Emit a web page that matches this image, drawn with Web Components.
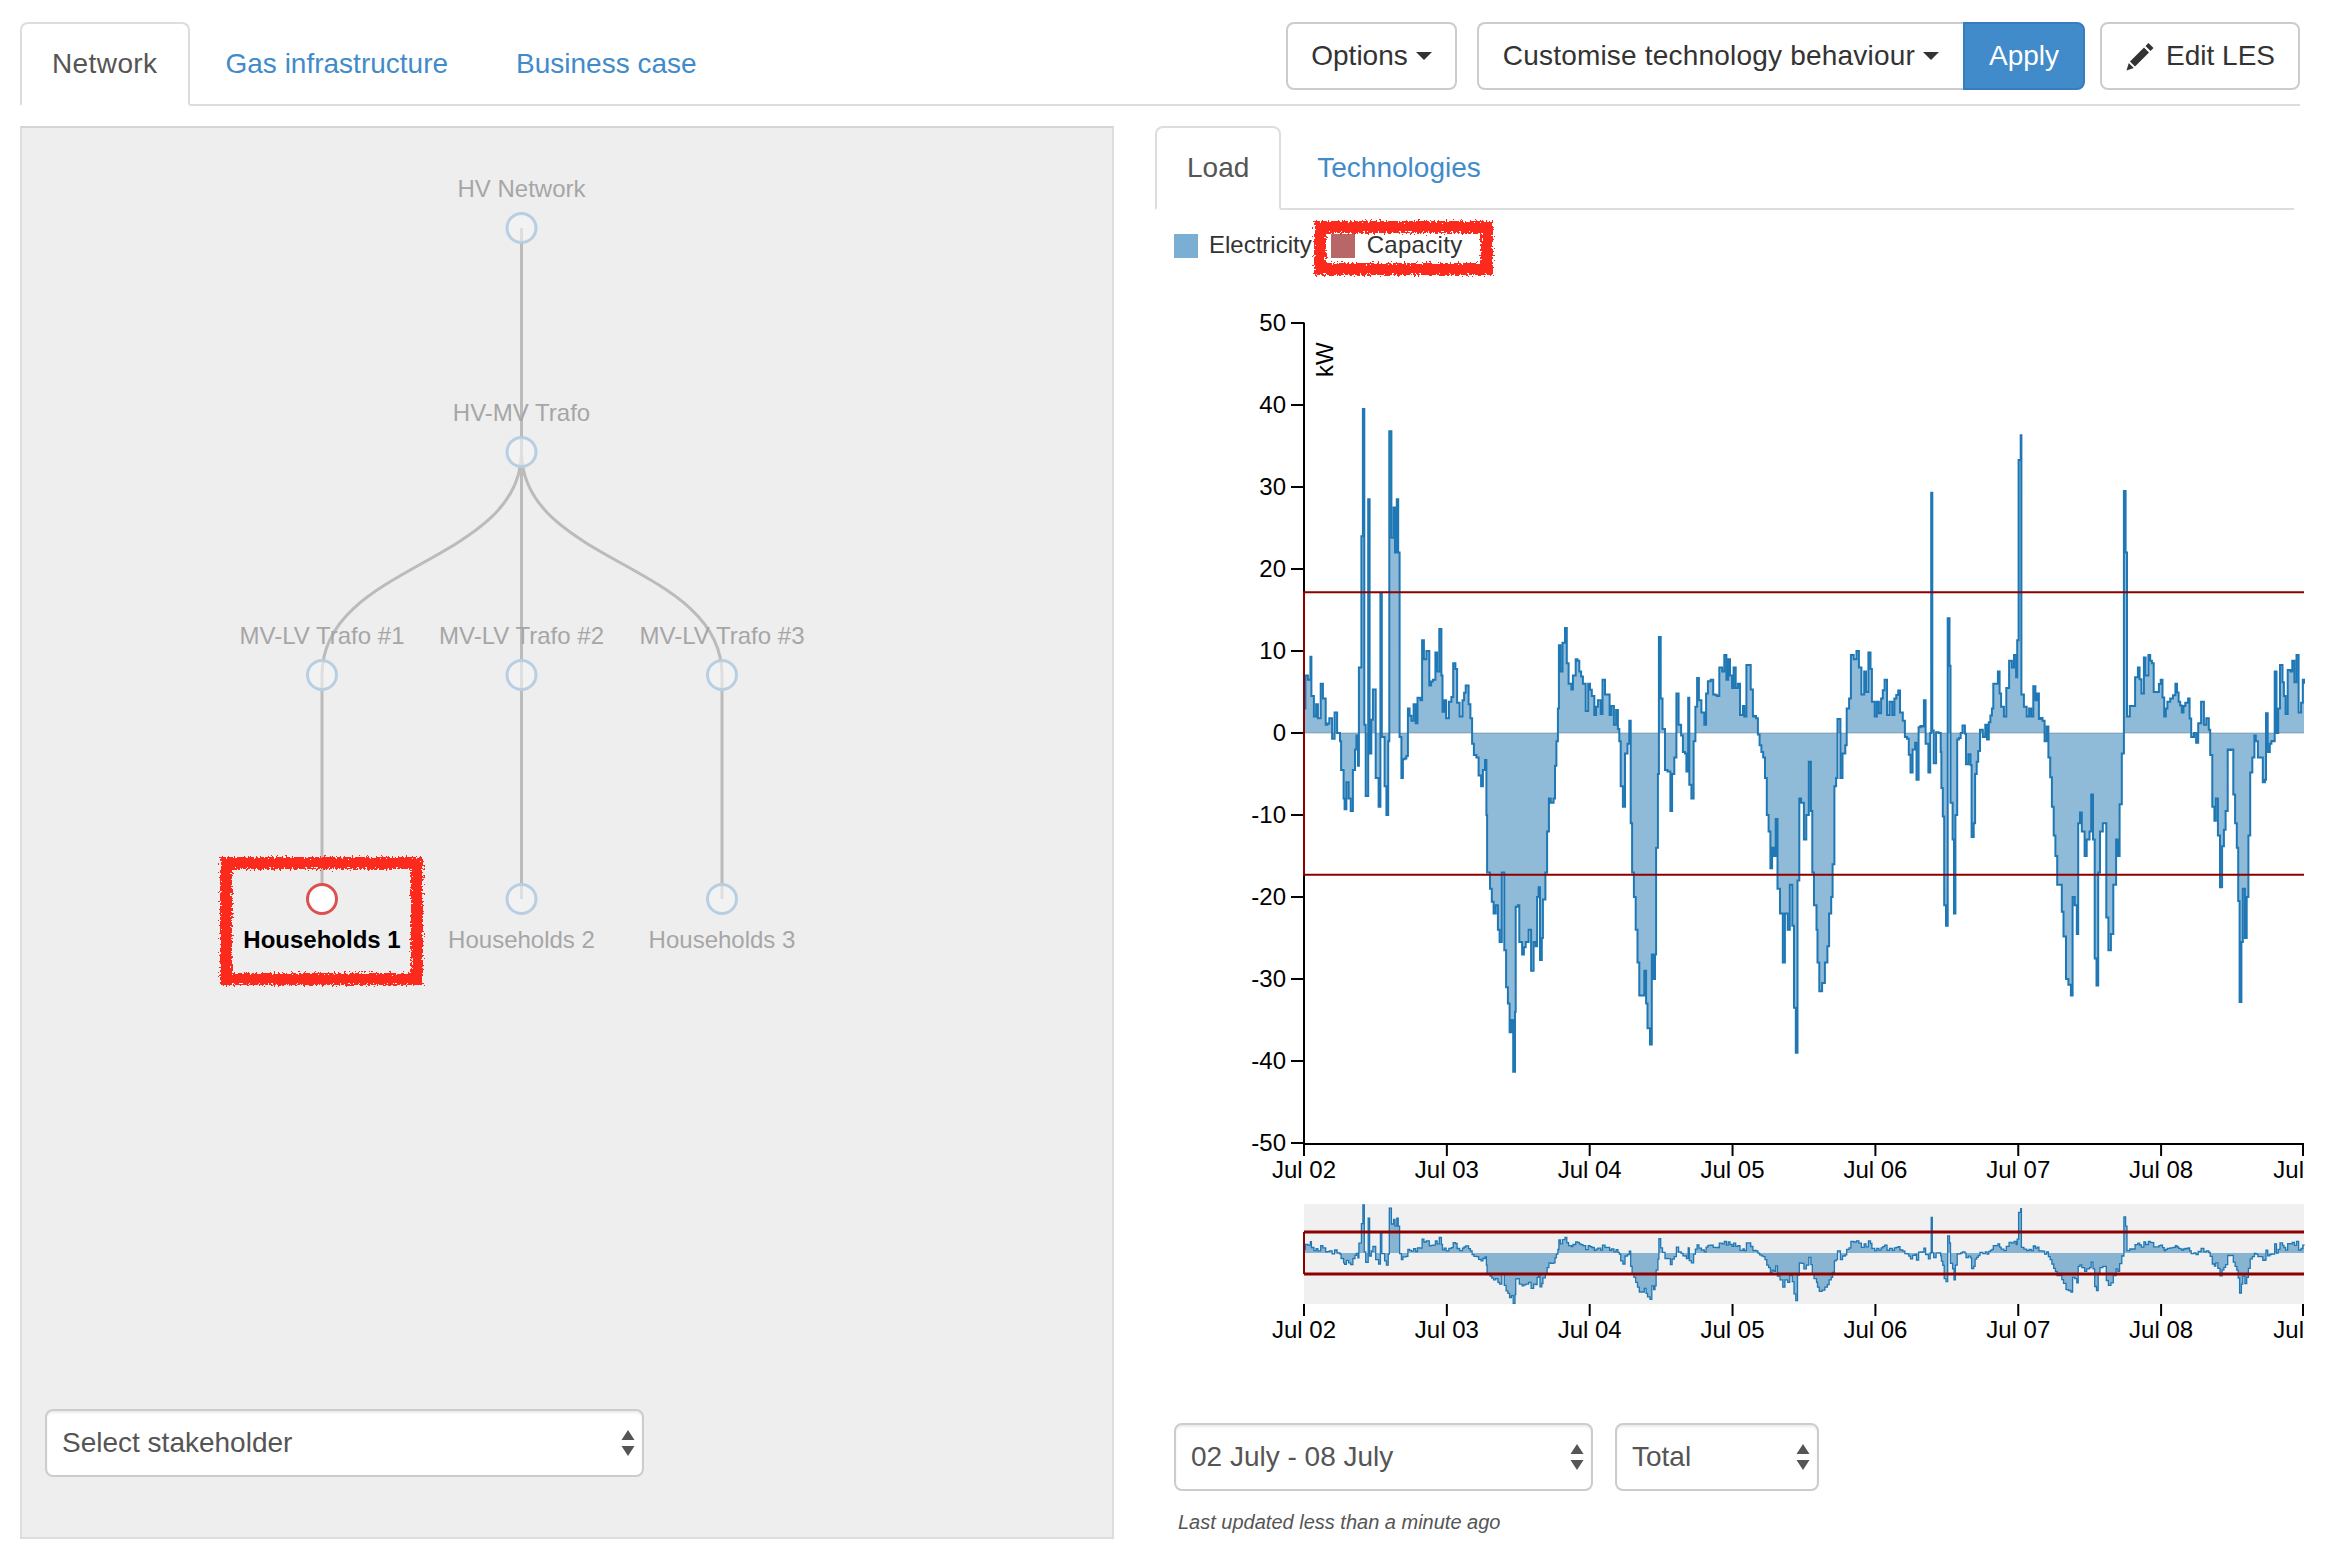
<!DOCTYPE html>
<html>
<head>
<meta charset="utf-8">
<title>LES</title>
<style>
  html, body { margin: 0; background: #fff; }
  body { font-family: "Liberation Sans", Arial, sans-serif; font-size: 28px; color: #333; }
</style>
</head>
<body>
<les-app></les-app>
<script>
// traced from the reference: [zoom x, kW], first part x = 1240 + zx / 2.8, second x = 1780 + zx / 2.85
const TRACE_A = [179,3,183,7,190,6.5,197,9.3,200,4.5,207,2,213,3.5,218,1.8,226,6,232,4.2,240,1,250,1.8,258,-.7,265,2.5,272,0,280,-1,283,-4.5,290,-8,293,-9.3,298,-6,304,-8,310,-9.5,316,-4.5,322,-2,326,-.3,330,-4,333,8,340,24,344,39.5,348,1,352,-7.7,359,28.5,363,-2.5,372,5.3,380,-5.5,388,-9,393,17,397,-.5,405,-6.5,410,-10,415,-1,418,36.8,424,23.8,430,27.5,434,22,439,28.5,443,22,447,-.5,452,-5.5,456,-3.2,466,-2.8,470,3,480,1.5,486,3.5,492,1.2,497,4.3,505,4,510,11.3,515,9,522,10,530,5.8,540,6.5,547,9.8,552,7.5,558,12.7,564,7,567,2.6,572,4,577,1.8,585,3.8,592,4.4,597,8.5,603,7.8,608,3.7,615,2,623,4,632,5.8,640,3.5,645,1.8,650,-1.3,655,-2.7,662,-3,668,-5.2,675,-6.5,680,-4.5,686,-3.3,690,-10,692,-17,700,-19,710,-22,716,-21,722,-24,727,-25.5,733,-17,740,-26.5,745,-31,750,-33,755,-36.5,760,-35,765,-41.3,770,-34,772,-21.2,778,-21,782,-25.5,790,-27,800,-25.5,808,-24,815,-29,822,-25.5,828,-26,832,-20,836,-18.8,840,-27.7,845,-25,848,-20.3,855,-17,860,-12,865,-8,870,-8.5,878,-8,882,-4,886,-1,890,3,893,10.7,897,7.5,903,11,910,12.8,915,8.5,920,6,928,5.3,932,7,940,9,945,8.8,950,7.5,960,6,968,2.7,975,6,985,4.5,992,2.2,1002,4,1010,2.3,1015,6.5,1022,4.7,1030,4.7,1035,2.2,1040,3.3,1047,1,1053,2.8,1058,.5,1062,-1,1066,-6.5,1072,-9,1078,-2.5,1085,-1.3,1090,1.5,1094,-11,1098,-17,1103,-20,1108,-24,1113,-28,1118,-32,1125,-32,1132,-29,1137,-33,1141,-36,1148,-38,1153,-27,1158,-30,1162,-27,1165,-14,1170,-5,1173,11.7,1178,4.2,1183,.5,1190,-4.5,1197,-4.7,1205,-9.5,1210,-5,1216,-3,1222,4.8,1228,1,1235,-.3,1240,-2.3,1246,-2.5,1250,-4.7,1255,4.3,1258,-6.3,1264,-8,1270,-1,1275,3.2,1280,6.7,1285,4,1292,2.5,1300,1,1305,4.8,1310,6.3,1318,6.5,1325,4.7,1335,4.5,1342,8,1350,7.5,1356,9.5,1362,6.5,1367,9,1372,7,1378,5.5,1382,8,1388,5.5,1394,6,1400,2.2,1408,3.3,1412,2,1418,8.3,1423,8.3,1430,5.3,1436,2,1445,1.8,1450,-.2,1455,-1.5,1460,-2.3,1465,-3,1470,-5.5,1475,-10,1480,-12,1485,-16.5,1490,-14,1495,-15,1500,-10.5,1505,-19];
const TRACE_B = [0,-22,8,-28,14,-22,22,-24,28,-18.5,35,-23.5,40,-33.5,45,-39,50,-18,55,-8,60,-8.5,68,-13,75,-10,82,-3.5,88,-9.5,92,-17,97,-21,104,-24,107,-28,112,-31.5,120,-30.5,128,-28,135,-26,140,-22,146,-20,150,-16,155,-6.5,160,-5.5,164,1.7,172,-5.5,178,-2.5,186,-1.5,190,3,197,4.2,202,9.5,210,9,218,10,225,8,232,4.7,240,7.5,245,5,252,9.8,258,7.8,262,3.8,270,2,276,3.8,282,2.4,288,4.2,298,6.5,305,2.2,312,3.8,320,2.2,326,4.2,337,5.2,342,2.5,350,1.5,356,-.5,362,-.7,372,-4.8,378,-2,385,-1.2,389,-5.7,395,.7,405,.8,410,4,415,-1.3,423,-4.8,428,0,431,29.3,434,.3,438,-3.7,445,.1,452,0,458,-2.3,460,-6.7,464,-10.2,468,-21,473,-23.5,478,14,483,8.2,486,-8.5,492,-13,496,-22,500,-10,505,-.8,515,0,520,.9,527,-.1,530,-3.8,537,-2.6,543,-3.9,546,-12.7,552,-11,556,-5,565,-2.2,570,.4,578,-.5,585,1,590,-.8,595,1.3,604,3,608,6,615,6,621,7.5,626,4.8,630,3.2,638,2,645,5.5,653,8.8,661,8,667,9.5,673,6.8,676,11.3,680,33.3,686,36.3,688,4.7,695,3.2,703,2,710,3,716,2,722,5.7,728,4,733,4.8,738,1.7,748,1.5,754,-1,760,.8,765,-3,770,-5.4,775,-9,780,-12.5,785,-15,790,-18.5,797,-18.5,803,-21.8,808,-24.8,815,-30,822,-30.7,829,-32,834,-20,840,-21,846,-24.5,850,-11,855,-9.7,860,-12,868,-15,874,-13,882,-12,887,-7.5,892,-13,897,-27.5,902,-30.8,907,-17,912,-12,920,-11,925,-11,930,-22.5,936,-26.5,943,-24.5,950,-18.5,958,-13,963,-15,968,-8.7,974,-2.5,980,29.5,985,22,989,2,997,3.3,1005,3.3,1012,6.8,1020,8,1030,4.8,1037,9.2,1042,7,1050,9.5,1060,8.5,1065,5,1075,5,1085,6.5,1095,2,1104,3.8,1112,4.2,1120,4.6,1127,6,1136,3.8,1145,2.5,1155,3.7,1163,4.2,1172,-.5,1180,0,1186,-1.2,1192,1.2,1200,3.8,1208,1,1215,1.8,1222,.4,1226,-2.7,1232,-9,1238,-10.7,1242,-8,1248,-12.5,1254,-18.8,1260,-13.8,1265,-11.8,1270,-9.5,1276,-2,1285,-2,1292,-7.5,1297,-11,1302,-14,1306,-20.5,1310,-32.8,1315,-25.5,1319,-19,1325,-25,1330,-20,1335,-12.5,1340,-4.8,1346,-3,1352,-.3,1356,-1,1362,-3,1370,-3,1376,-6,1382,-5.7,1385,2.4,1390,-2.3,1396,-1.3,1405,-1,1410,7.5,1415,0,1420,3,1425,8.3,1432,6.2,1436,4.5,1441,2.3,1447,7.7,1455,7.5,1460,8.8,1466,6.2,1472,9.5,1478,2.5,1485,3.7,1490,6.5,1493,6];

function buildSeries() {
  const nodes = [];
  for (let i = 0; i < TRACE_A.length; i += 2) nodes.push([1240 + TRACE_A[i] / 2.8, TRACE_A[i + 1]]);
  for (let i = 0; i < TRACE_B.length; i += 2) nodes.push([1780 + TRACE_B[i] / 2.85, TRACE_B[i + 1]]);
  nodes[0][0] = 1304;
  nodes[nodes.length - 1][0] = 2304;
  // fill gaps with 15 minute samples so the line stays stepped
  const dx = 1000 / (7 * 96);
  let seed = 7;
  const rnd = () => (seed = (seed * 16807) % 2147483647) / 2147483647;
  const out = [];
  nodes.forEach((n, i) => {
    out.push(n);
    const next = nodes[i + 1];
    if (!next) return;
    const steps = Math.floor((next[0] - n[0]) / dx);
    for (let k = 1; k < steps; k++) {
      const t = k / steps;
      const v = n[1] + (next[1] - n[1]) * t + (rnd() - .5) * .5;
      out.push([n[0] + (next[0] - n[0]) * t, v]);
    }
  });
  return out;
}

function stepLine(series, yOf) {
  let d = `M${series[0][0].toFixed(1)} ${yOf(series[0][1]).toFixed(1)}`;
  for (let i = 1; i < series.length; i++) {
    d += `H${series[i][0].toFixed(1)}V${yOf(series[i][1]).toFixed(1)}`;
  }
  return d;
}

class NavTab extends HTMLElement {
  connectedCallback() {
    this.attachShadow({ mode: 'open' }).innerHTML = `
      <style>
        :host {
          display: block;
          margin: 0 4px -2px 0;
          padding: 20px 30px;
          border: 2px solid transparent;
          border-radius: 8px 8px 0 0;
          line-height: 40px;
          font-size: 28px;
          color: #428bca;
        }
        :host([active]) {
          color: #555;
          background: #fff;
          border-color: #ddd #ddd #fff;
        }
      </style>
      <slot></slot>`;
  }
}
customElements.define('nav-tab', NavTab);

class TabBar extends HTMLElement {
  connectedCallback() {
    this.attachShadow({ mode: 'open' }).innerHTML = `
      <style>
        :host {
          display: flex;
          justify-content: space-between;
          border-bottom: 2px solid #ddd;
        }
        .tabs { display: flex; }
        .actions { display: flex; align-items: flex-start; }
      </style>
      <div class="tabs"><slot></slot></div>
      <div class="actions"><slot name="actions"></slot></div>`;
  }
}
customElements.define('tab-bar', TabBar);

class UiBtn extends HTMLElement {
  connectedCallback() {
    const caret = this.hasAttribute('caret') ? '<span class="caret"></span>' : '';
    this.attachShadow({ mode: 'open' }).innerHTML = `
      <style>
        :host {
          display: flex;
          align-items: center;
          box-sizing: border-box;
          height: 68px;
          padding: 0 24px;
          background: #fff;
          border: 2px solid #ccc;
          border-radius: 8px;
          font-size: 28px;
          color: #333;
          white-space: nowrap;
        }
        :host([primary]) {
          background: #428bca;
          border-color: #357ebd;
          color: #fff;
        }
        :host([left]) { border-radius: 8px 0 0 8px; border-right: 0; }
        :host([right]) { border-radius: 0 8px 8px 0; }
        .caret {
          width: 0; height: 0;
          margin-left: 8px;
          border-top: 8px solid currentColor;
          border-left: 8px solid transparent;
          border-right: 8px solid transparent;
        }
      </style>
      <slot></slot>${caret}`;
  }
}
customElements.define('ui-btn', UiBtn);

class UiSelect extends HTMLElement {
  connectedCallback() {
    this.attachShadow({ mode: 'open' }).innerHTML = `
      <style>
        :host {
          display: flex;
          align-items: center;
          justify-content: space-between;
          box-sizing: border-box;
          height: 68px;
          padding: 0 7px 0 15px;
          background: #fff;
          border: 2px solid #ccc;
          border-radius: 8px;
          box-shadow: inset 0 2px 2px rgba(0, 0, 0, .075);
          font-size: 28px;
          color: #555;
        }
        svg { flex: none; }
      </style>
      <slot></slot>
      <svg width="14" height="26" viewBox="0 0 14 26">
        <path d="M7 0 L13.5 10 L.5 10Z M7 26 L13.5 16 L.5 16Z" fill="#555"/>
      </svg>`;
  }
}
customElements.define('ui-select', UiSelect);

// the hand drawn red marker round a region
class ScribbleBox extends HTMLElement {
  connectedCallback() {
    const w = +this.getAttribute('w');
    const h = +this.getAttribute('h');
    const t = +this.getAttribute('thick') || 11;
    this.attachShadow({ mode: 'open' }).innerHTML = `
      <style>
        :host { display: block; position: absolute; pointer-events: none; }
        svg { display: block; overflow: visible; }
      </style>
      <svg width="${w}" height="${h}">
        <filter id="rough" x="-10%" y="-20%" width="120%" height="140%">
          <feTurbulence type="fractalNoise" baseFrequency="0.5" numOctaves="3" seed="4"/>
          <feDisplacementMap in="SourceGraphic" scale="9" xChannelSelector="R" yChannelSelector="G"/>
        </filter>
        <rect x="${t / 2}" y="${t / 2}" width="${w - t}" height="${h - t}"
          fill="none" stroke="#fb2b1b" stroke-width="${t}" filter="url(#rough)"/>
      </svg>`;
  }
}
customElements.define('scribble-box', ScribbleBox);

class NetTree extends HTMLElement {
  connectedCallback() {
    const X = [322, 521.5, 722];
    const Y = [228, 452, 675, 899];
    const links = [
      [X[1], Y[0], X[1], Y[1]],
      [X[1], Y[1], X[0], Y[2]],
      [X[1], Y[1], X[1], Y[2]],
      [X[1], Y[1], X[2], Y[2]],
      [X[0], Y[2], X[0], Y[3]],
      [X[1], Y[2], X[1], Y[3]],
      [X[2], Y[2], X[2], Y[3]]
    ];
    const nodes = [
      [X[1], Y[0], 'HV Network', -31],
      [X[1], Y[1], 'HV-MV Trafo', -31],
      [X[0], Y[2], 'MV-LV Trafo #1', -31],
      [X[1], Y[2], 'MV-LV Trafo #2', -31],
      [X[2], Y[2], 'MV-LV Trafo #3', -31],
      [X[0], Y[3], 'Households 1', 49, true],
      [X[1], Y[3], 'Households 2', 49],
      [X[2], Y[3], 'Households 3', 49]
    ];
    const linkSvg = links.map(([x1, y1, x2, y2]) => {
      const m = (y1 + y2) / 2;
      return `<path d="M${x1} ${y1}C${x1} ${m} ${x2} ${m} ${x2} ${y2}"/>`;
    }).join('');
    const nodeSvg = nodes.map(([x, y, label, dy, sel]) => `
      <circle class="${sel ? 'sel' : ''}" cx="${x}" cy="${y}" r="14.5"/>
      <text class="${sel ? 'sel' : ''}" x="${x}" y="${y + dy}">${label}</text>`).join('');
    this.attachShadow({ mode: 'open' }).innerHTML = `
      <style>
        :host {
          display: flex;
          flex-direction: column;
          position: relative;
          box-sizing: border-box;
          width: 1094px;
          height: 1413px;
          padding: 0 0 60px 23px;
          background: #eee;
          border: 2px solid #ddd;
          border-top-color: #d4d4d4;
        }
        svg { display: block; margin-left: -23px; }
        .links path { fill: none; stroke: #bbb; stroke-width: 3; }
        circle { fill: #f5f5f5; fill-opacity: .6; stroke: #b7cee3; stroke-width: 3; }
        circle.sel { fill: #fff; fill-opacity: 1; stroke: #dd5050; }
        text { font-size: 24px; text-anchor: middle; fill: #a6a6a6; }
        text.sel { fill: #000; font-weight: bold; }
        ::slotted(ui-select) { width: 599px; margin-top: auto; }
        scribble-box { left: 197.5px; top: 729px; }
      </style>
      <svg width="1089" height="1200" viewBox="22 128 1089 1200">
        <g class="links">${linkSvg}</g>
        ${nodeSvg}
      </svg>
      <slot></slot>
      <scribble-box w="203" h="128" thick="12"></scribble-box>`;
  }
}
customElements.define('net-tree', NetTree);

class LoadLegend extends HTMLElement {
  connectedCallback() {
    this.attachShadow({ mode: 'open' }).innerHTML = `
      <style>
        :host {
          display: flex;
          position: relative;
          box-sizing: border-box;
          height: 80px;
          padding: 23px 0 0 19px;
          font-size: 24px;
          line-height: 24px;
          color: #333;
        }
        i { flex: none; width: 24px; height: 24px; margin-right: 11px; margin-top: 1px; }
        .e { background: #7aaed3; }
        .c { background: #b76767; }
        span { white-space: nowrap; }
        .gap { width: 19px; }
        .capacity { letter-spacing: .3px; margin-left: 1px; }
        scribble-box { left: 159px; top: 11px; }
      </style>
      <i class="e"></i><span>Electricity</span><div class="gap"></div>
      <i class="c"></i><span class="capacity">Capacity</span>
      <scribble-box w="179" h="54" thick="12"></scribble-box>`;
  }
}
customElements.define('load-legend', LoadLegend);

class LoadChart extends HTMLElement {
  connectedCallback() {
    const series = buildSeries();
    const x0 = 1304, x1 = 2304;
    const mainY = v => 733 - v * 8.2;
    const miniY = v => Math.max(1204, Math.min(1304, 1253 - v * 1.22));
    const first = series[0][0];

    let yTicks = '';
    for (let v = 50; v >= -50; v -= 10) {
      const y = mainY(v);
      yTicks += `<line x1="1291" x2="${x0}" y1="${y}" y2="${y}"/><text class="y" x="1286" y="${y + 8}">${v}</text>`;
    }
    const days = ['Jul 02', 'Jul 03', 'Jul 04', 'Jul 05', 'Jul 06', 'Jul 07', 'Jul 08'];
    const xAxis = (y, labelY) => {
      let s = `<line x1="${x0}" x2="${x0}" y1="${y}" y2="${y + 12}"/>`;
      days.forEach((d, i) => {
        const x = x0 + i * 142.85;
        s += `<line x1="${x}" x2="${x}" y1="${y}" y2="${y + 12}"/><text class="x" x="${x}" y="${labelY}">${d}</text>`;
      });
      s += `<line x1="${x1 - 1}" x2="${x1 - 1}" y1="${y}" y2="${y + 12}"/><text class="x end" x="${x1}" y="${labelY}">Jul</text>`;
      return s;
    };
    const mainLine = stepLine(series, mainY);
    const miniLine = stepLine(series, miniY);
    const area = (d, base) => `${d}V${base}H${first}Z`;
    const capUp = mainY(17.15), capDown = mainY(-17.3);

    this.attachShadow({ mode: 'open' }).innerHTML = `
      <style>
        :host { display: block; }
        svg { display: block; }
        text { font-size: 24px; fill: #000; }
        .y { text-anchor: end; }
        .x { text-anchor: middle; }
        .x.end { text-anchor: end; }
        .axis line { stroke: #000; stroke-width: 2; }
        .fill { fill: #1f77b4; fill-opacity: .5; stroke: none; }
        .line { fill: none; stroke: #1f77b4; stroke-width: 2; }
        .mini .line { stroke-width: 1.3; }
        .cap { fill: none; stroke: #8b0000; stroke-width: 2; }
      </style>
      <svg width="1175" height="1114" viewBox="1155 290 1175 1114">
        <rect x="${x0}" y="732" width="1000" height="2" fill="#ddd"/>
        <g class="axis">
          <line x1="${x0}" x2="${x0}" y1="322.5" y2="1144"/>
          <line x1="${x0}" x2="${x1}" y1="1144" y2="1144"/>
          ${yTicks}
          ${xAxis(1144, 1178)}
        </g>
        <text transform="translate(1333 377) rotate(-90)">kW</text>
        <path class="fill" d="${area(mainLine, 733)}"/>
        <path class="line" d="${mainLine}"/>
        <path class="cap" d="M${x1} ${capUp}H${x0}V${capDown}H${x1}"/>
        <g class="mini">
          <rect x="${x0}" y="1204" width="1000" height="100" fill="#f0f0f0"/>
          <path class="fill" d="${area(miniLine, 1253)}"/>
          <path class="line" d="${miniLine}"/>
          <path class="cap" d="M${x0} 1232V1274"/>
          <path class="cap" style="stroke-width:3" d="M${x0} 1232H${x1}M${x0} 1274H${x1}"/>
        </g>
        <g class="axis">${xAxis(1304, 1338)}</g>
      </svg>`;
  }
}
customElements.define('load-chart', LoadChart);

class LesApp extends HTMLElement {
  connectedCallback() {
    this.attachShadow({ mode: 'open' }).innerHTML = `
      <style>
        :host {
          display: block;
          box-sizing: border-box;
          width: 2330px;
          height: 1558px;
          padding: 22px 0 0 20px;
          overflow: hidden;
        }
        .top { width: 2280px; }
        .main { display: flex; margin-top: 20px; }
        .side { margin-left: 41px; width: 1175px; }
        .side tab-bar { width: 1139px; }
        .group { display: flex; margin: 0 15px 0 20px; }
        .network { letter-spacing: .4px; }
        .options { padding: 0 23px; }
        .customise { letter-spacing: .2px; }
        .edit { padding: 0 23px; }
        .pencil { flex: none; margin-right: 11px; }
        .filters { display: flex; margin: 19px 0 0 19px; gap: 22px; }
        .date { width: 419px; }
        .kind { width: 204px; }
        .updated {
          margin: 17px 0 0 23px;
          font-size: 20px;
          line-height: 28px;
          font-style: italic;
          color: #555;
        }
      </style>
      <div class="top">
        <tab-bar>
          <nav-tab class="network" active>Network</nav-tab>
          <nav-tab>Gas infrastructure</nav-tab>
          <nav-tab>Business case</nav-tab>
          <ui-btn class="options" slot="actions" caret>Options</ui-btn>
          <div class="group" slot="actions">
            <ui-btn class="customise" caret left>Customise technology behaviour</ui-btn>
            <ui-btn primary right>Apply</ui-btn>
          </div>
          <ui-btn class="edit" slot="actions">
            <svg class="pencil" width="30" height="29" viewBox="0 0 30 29">
              <path fill="#333" d="M23.5 1l5 5-3 3-5-5z M19 5.5l5 5-14 14-5-5z M3.8 21l5 5-7.3 2.4z"/>
            </svg>Edit LES
          </ui-btn>
        </tab-bar>
      </div>
      <div class="main">
        <net-tree>
          <ui-select>Select stakeholder</ui-select>
        </net-tree>
        <div class="side">
          <tab-bar>
            <nav-tab active>Load</nav-tab>
            <nav-tab>Technologies</nav-tab>
          </tab-bar>
          <load-legend></load-legend>
          <load-chart></load-chart>
          <div class="filters">
            <ui-select class="date">02 July - 08 July</ui-select>
            <ui-select class="kind">Total</ui-select>
          </div>
          <div class="updated">Last updated less than a minute ago</div>
        </div>
      </div>`;
  }
}
customElements.define('les-app', LesApp);
</script>
</body>
</html>
